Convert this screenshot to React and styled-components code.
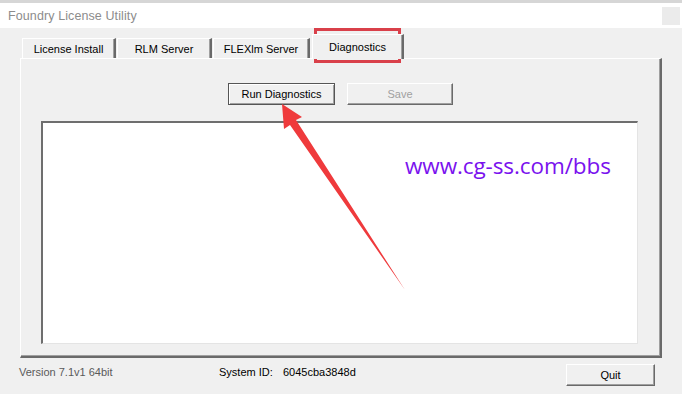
import styled, { createGlobalStyle } from "styled-components";

const GlobalStyle = createGlobalStyle`
  html, body {
    margin: 0;
    padding: 0;
    background: #f0f0f0;
  }
  body {
    font-family: "Liberation Sans", Arial, sans-serif;
    font-size: 11px;
    color: #000;
  }
`;

const StyledWindow = styled.div`
  position: relative;
  width: 682px;
  height: 394px;
  display: flex;
  flex-direction: column;
  background: #f0f0f0;
  border-top: 3px solid #d6d6d6;
  box-sizing: border-box;
  overflow: hidden;
`;

const StyledTitleBar = styled.div`
  height: 25px;
  flex: none;
  display: flex;
  align-items: center;
  justify-content: space-between;
  padding: 0 2px 0 8px;
  background: #fff;
`;

const StyledTitle = styled.span`
  font-size: 12.5px;
  color: #8c8c8c;
  letter-spacing: 0.1px;
`;

const StyledCloseBox = styled.span`
  width: 18px;
  height: 18px;
  background: #ebebeb;
`;

const StyledBody = styled.div`
  flex: 1;
  display: flex;
  flex-direction: column;
  padding: 5px 20px 0 20px;
`;

const StyledTabStrip = styled.div`
  height: 25px;
  display: flex;
  align-items: flex-end;
  padding-left: 2px;
  position: relative;
  z-index: 1;
`;

const StyledTab = styled.div`
  height: ${(props) => (props.active ? "25px" : "20px")};
  width: ${(props) => props.w}px;
  margin: ${(props) => (props.active ? "0 -2px 0 1px" : "0 1px 0 0")};
  display: flex;
  align-items: ${(props) => (props.active ? "flex-start" : "center")};
  justify-content: center;
  padding-top: ${(props) => (props.active ? "6px" : "0")};
  box-sizing: border-box;
  background: #f0f0f0;
  border-top: 1px solid #fff;
  border-left: 1px solid #fff;
  border-right: 2px solid #6a6a6a;
  box-shadow: inset -1px 0 0 #a0a0a0;
  margin-bottom: ${(props) => (props.active ? "-1px" : "0")};
`;

const StyledPanel = styled.div`
  height: 300px;
  display: flex;
  flex-direction: column;
  align-items: center;
  box-sizing: border-box;
  padding: 24px 22px 12px 20px;
  border-top: 1px solid #fff;
  border-left: 1px solid #fff;
  border-right: 2px solid #6a6a6a;
  border-bottom: 2px solid #6a6a6a;
  box-shadow: inset -1px -1px 0 #a0a0a0;
`;

const StyledButtonRow = styled.div`
  display: flex;
  gap: 12px;
  margin-left: 2px;
`;

const StyledButton = styled.button`
  height: 22px;
  width: ${(props) => props.w}px;
  padding: 0;
  font-family: inherit;
  font-size: 11px;
  color: ${(props) => (props.disabled ? "#a0a0a0" : "#000")};
  background: #f0f0f0;
  box-sizing: border-box;
  border: 1px solid;
  border-color: ${(props) =>
    props.primary
      ? "#555 #555 #555 #555"
      : "#fff #6a6a6a #6a6a6a #fff"};
  box-shadow: ${(props) =>
    props.primary
      ? "inset 1px 1px 0 #fff, inset -1px -1px 0 #a0a0a0"
      : "inset -1px -1px 0 #a0a0a0"};
`;

const StyledOutput = styled.div`
  margin-top: 16px;
  align-self: stretch;
  flex: 1;
  background: #fff;
  border-top: 2px solid #6e6e6e;
  border-left: 2px solid #6e6e6e;
  border-right: 1px solid #e4e4e4;
  border-bottom: 1px solid #e4e4e4;
  position: relative;
`;

const StyledWatermark = styled.span`
  position: absolute;
  left: 362px;
  top: 27px;
  font-family: "Open Sans", "Noto Sans", sans-serif;
  font-size: 22.5px;
  font-weight: 500;
  color: #7a12ee;
  letter-spacing: -0.1px;
`;

const StyledFooter = styled.div`
  flex: 1;
  display: flex;
  align-items: flex-start;
`;

const StyledFooterText = styled.span`
  width: ${(props) => props.w || "auto"};
  color: ${(props) => props.color || "#000"};
  margin-left: ${(props) => props.ml || "0"};
  line-height: 16px;
  margin-top: 6px;
`;

const StyledSpacer = styled.span`
  flex: 1;
`;

const StyledQuit = styled(StyledButton)`
  margin-right: 7px;
  margin-top: 6px;
`;

const StyledOverlay = styled.svg`
  position: absolute;
  left: 0;
  top: -3px;
  pointer-events: none;
`;

const tabs = [
  { label: "License Install", w: 94 },
  { label: "RLM Server", w: 95 },
  { label: "FLEXlm Server", w: 97 },
  { label: "Diagnostics", w: 92, active: true },
];

export default function App() {
  return (
    <>
      <GlobalStyle />
      <StyledWindow>
        <StyledTitleBar>
          <StyledTitle>Foundry License Utility</StyledTitle>
          <StyledCloseBox />
        </StyledTitleBar>
        <StyledBody>
          <StyledTabStrip>
            {tabs.map((t) => (
              <StyledTab key={t.label} w={t.w} active={t.active}>
                {t.label}
              </StyledTab>
            ))}
          </StyledTabStrip>
          <StyledPanel>
            <StyledButtonRow>
              <StyledButton w={107} primary>
                Run Diagnostics
              </StyledButton>
              <StyledButton w={106} disabled>
                Save
              </StyledButton>
            </StyledButtonRow>
            <StyledOutput>
              <StyledWatermark>www.cg-ss.com/bbs</StyledWatermark>
            </StyledOutput>
          </StyledPanel>
          <StyledFooter>
            <StyledFooterText w="200px" color="#5a5a5a" ml="-1px">
              Version 7.1v1 64bit
            </StyledFooterText>
            <StyledFooterText w="64px">System ID:</StyledFooterText>
            <StyledFooterText>6045cba3848d</StyledFooterText>
            <StyledSpacer />
            <StyledQuit w={89}>Quit</StyledQuit>
          </StyledFooter>
        </StyledBody>
        <StyledOverlay width="682" height="394" viewBox="0 0 682 394">
          <rect
            x="315.5"
            y="29.5"
            width="84"
            height="32"
            fill="none"
            stroke="#d9404a"
            strokeWidth="3"
          />
          <polygon
            points="282,104 302,117 296,120 405,290 290,125 284,129"
            fill="#ef3a3c"
          />
        </StyledOverlay>
      </StyledWindow>
    </>
  );
}
